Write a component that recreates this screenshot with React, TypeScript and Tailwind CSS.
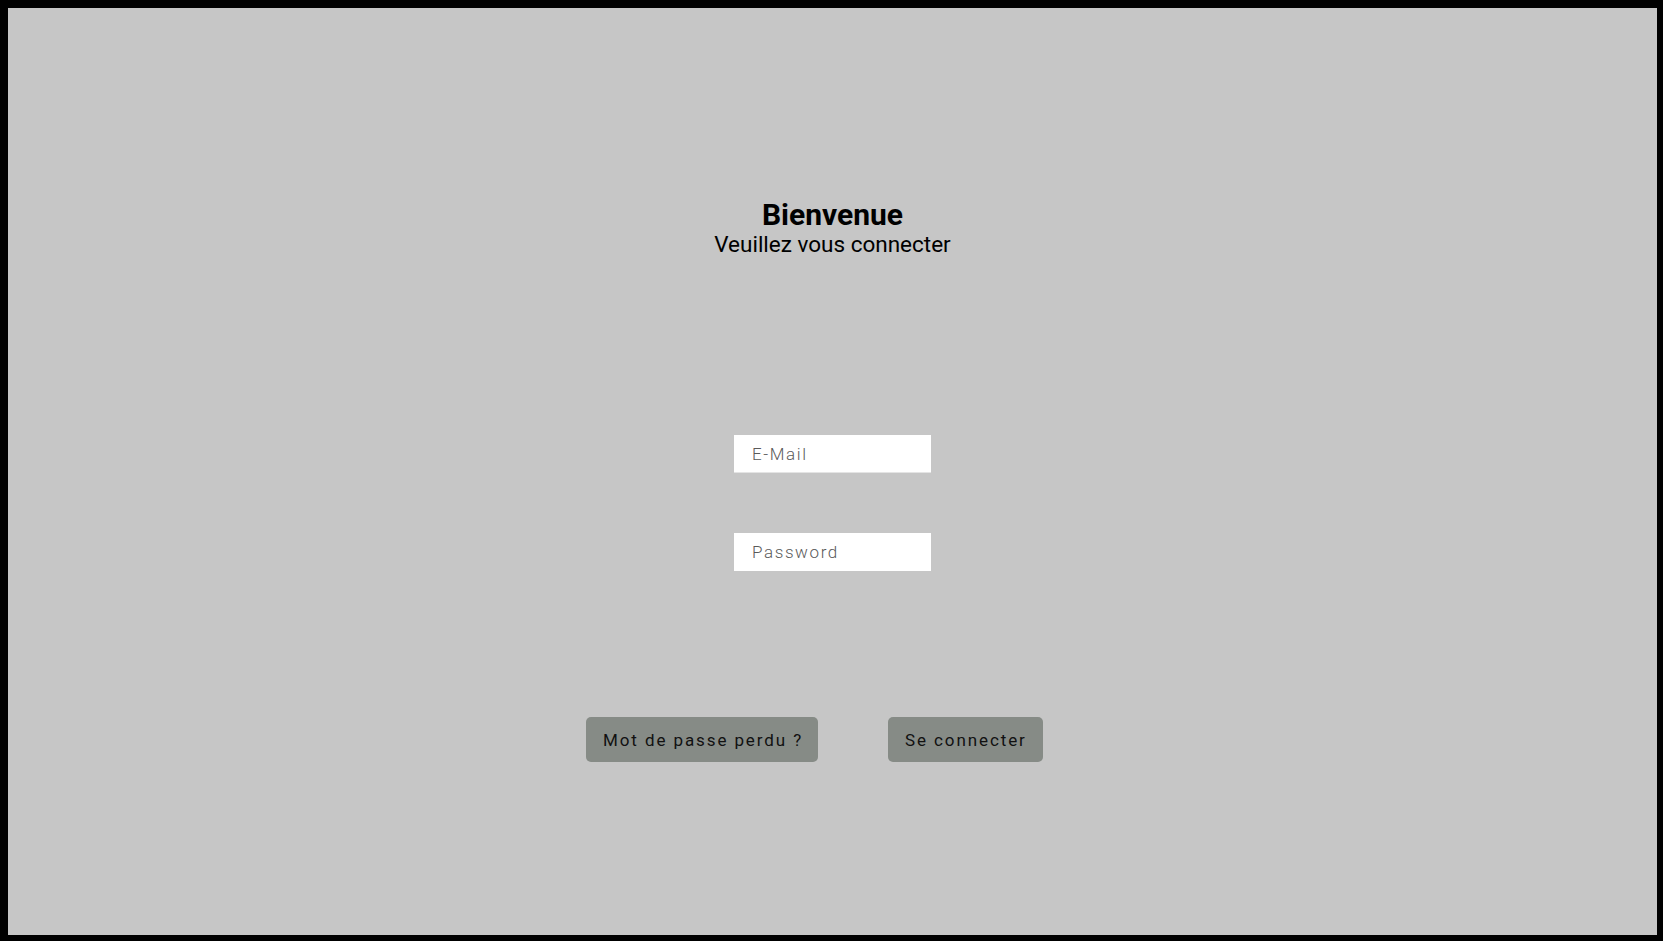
import React from "react";

export default function App() {
  return (
    <div
      className="w-[1663px] h-[941px] bg-black pt-[8px] pl-[8px] pr-[6px] pb-[6px]"
      style={{ fontFamily: "Roboto, 'Noto Sans', sans-serif" }}
    >
      <div className="w-full h-full bg-[#c6c6c6] flex flex-col items-center pt-[190px]">
        <h1 className="text-[30px] leading-[33px] font-bold text-black">Bienvenue</h1>
        <p className="text-[22.5px] leading-[26px] text-black">Veuillez vous connecter</p>

        <input
          type="text"
          placeholder="E-Mail"
          className="mt-[178px] w-[197px] h-[38px] bg-white pl-[18px] text-[17px] font-light tracking-[1.6px] text-[#333] placeholder:text-[#5a5a5a] outline-none border-b border-[#e4e4e4]"
        />
        <input
          type="password"
          placeholder="Password"
          className="mt-[60px] w-[197px] h-[38px] bg-white pl-[18px] text-[17px] font-light tracking-[1.6px] text-[#333] placeholder:text-[#5a5a5a] outline-none"
        />

        <div className="mt-[146px] flex flex-row justify-center gap-[70px] pr-[36px]">
          <button className="w-[232px] h-[45px] rounded-[5px] bg-[#868b86] text-[17px] tracking-[1.9px] text-[#111] pl-[17px] pt-[3px] text-left">
            Mot de passe perdu ?
          </button>
          <button className="w-[155px] h-[45px] rounded-[5px] bg-[#868b86] text-[17px] tracking-[1.9px] text-[#111] pl-[17px] pt-[3px] text-left">
            Se connecter
          </button>
        </div>
      </div>
    </div>
  );
}
